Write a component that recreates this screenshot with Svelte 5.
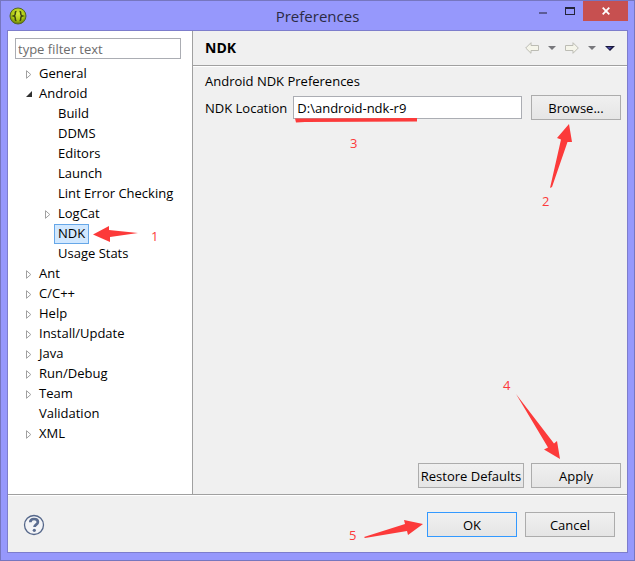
<script lang="ts">
	type Node = { label: string; level: number; state?: 'open' | 'closed' };

	const nodes: Node[] = [
		{ label: 'General', level: 0, state: 'closed' },
		{ label: 'Android', level: 0, state: 'open' },
		{ label: 'Build', level: 1 },
		{ label: 'DDMS', level: 1 },
		{ label: 'Editors', level: 1 },
		{ label: 'Launch', level: 1 },
		{ label: 'Lint Error Checking', level: 1 },
		{ label: 'LogCat', level: 1, state: 'closed' },
		{ label: 'NDK', level: 1 },
		{ label: 'Usage Stats', level: 1 },
		{ label: 'Ant', level: 0, state: 'closed' },
		{ label: 'C/C++', level: 0, state: 'closed' },
		{ label: 'Help', level: 0, state: 'closed' },
		{ label: 'Install/Update', level: 0, state: 'closed' },
		{ label: 'Java', level: 0, state: 'closed' },
		{ label: 'Run/Debug', level: 0, state: 'closed' },
		{ label: 'Team', level: 0, state: 'closed' },
		{ label: 'Validation', level: 0 },
		{ label: 'XML', level: 0, state: 'closed' }
	];

	const selected = 'NDK';
	let filter = $state('');
	let location = $state('D:\\android-ndk-r9');
</script>

<!-- step marks hang off the control they point at -->
{#snippet mark(step: string, x: number, y: number, d: string)}
	<svg class="mark" width="1" height="1" aria-hidden="true">
		<path {d} />
		<text {x} {y}>{step}</text>
	</svg>
{/snippet}

<div class="window">
	<header class="titlebar">
		<svg class="logo" width="18" height="18" viewBox="0 0 18 18" aria-hidden="true">
			<defs>
				<radialGradient id="ball" cx="50%" cy="35%" r="65%">
					<stop offset="0" stop-color="#d8ea3c" />
					<stop offset="0.65" stop-color="#a9c410" />
					<stop offset="1" stop-color="#5e7408" />
				</radialGradient>
			</defs>
			<circle cx="9" cy="9" r="8" fill="url(#ball)" stroke="#53652a" />
			<path d="M7.500 4.500C6 4.500 6.300 5.600 6.300 6.800S5.700 8.700 4.700 9c1 .3 1.600 1 1.600 2.200S6 13.500 7.500 13.500M10.500 4.500c1.500 0 1.200 1.100 1.200 2.300S12.300 8.700 13.300 9c-1 .3-1.600 1-1.600 2.200s.3 2.300-1.200 2.300" fill="none" stroke="#3c4510" stroke-width="1.500" />
		</svg>
		<h1>Preferences</h1>
		<div class="controls">
			<button class="min" aria-label="Minimize">
				<svg width="8" height="8" viewBox="0 0 8 8"><path d="M0 5h8v2H0z" fill="#5c5c96" /></svg>
			</button>
			<button class="max" aria-label="Maximize">
				<svg width="10" height="8" viewBox="0 0 10 8"><path d="M0 0h10v8H0zM1 2v5h8V2z" fill="#24243a" fill-rule="evenodd" /></svg>
			</button>
			<button class="close" aria-label="Close">
				<svg width="8" height="8" viewBox="0 0 8 8"><path d="M.7.7l6.600 6.600M7.300.7L.7 7.300" stroke="#fff" stroke-width="1.800" /></svg>
			</button>
		</div>
	</header>

	<div class="client">
		<div class="main">
			<aside class="sidebar">
				<input class="filter" type="text" placeholder="type filter text" aria-label="Filter" bind:value={filter} />
				<ul class="tree">
					{#each nodes as node (node.label)}
						<li class:child={node.level === 1}>
							<span class="twisty">
								{#if node.state === 'closed'}
									<svg width="6" height="9" viewBox="0 0 6 9"><path d="M.5.7v7.600L4.800 4.500z" fill="#fff" stroke="#a0a0a0" /></svg>
								{:else if node.state === 'open'}
									<svg width="6" height="6" viewBox="0 0 6 6"><path d="M6 0v6H0z" fill="#303030" /></svg>
								{/if}
							</span>
							<button class="item" class:selected={node.label === selected}>
								{node.label}
								{#if node.label === selected}
									{@render mark('1', 96, 16, 'M38 9.500L54 1V5L83 8 55 12V17z')}
								{/if}
							</button>
						</li>
					{/each}
				</ul>
			</aside>

			<section class="page">
				<header class="page-head">
					<h2>NDK</h2>
					<nav class="history">
						<button aria-label="Back">
							<svg width="14" height="12" viewBox="0 0 14 12"><path d="M.7 6L6 .7V3.500h7.500v5H6v2.800z" fill="#f5f5ea" stroke="#bcbcb4" /></svg>
						</button>
						<button aria-label="Back history">
							<svg width="8" height="4" viewBox="0 0 8 4"><path d="M0 0h8L4 4z" fill="#77777b" /></svg>
						</button>
						<button aria-label="Forward">
							<svg width="14" height="12" viewBox="0 0 14 12"><path d="M13.300 6L8 .7V3.500H.5v5H8v2.800z" fill="#f5f5ea" stroke="#bcbcb4" /></svg>
						</button>
						<button aria-label="Forward history">
							<svg width="8" height="4" viewBox="0 0 8 4"><path d="M0 0h8L4 4z" fill="#77777b" /></svg>
						</button>
						<button aria-label="View menu">
							<svg width="10" height="5" viewBox="0 0 10 5"><path d="M0 0h10L5 5z" fill="#17173c" /><path d="M2 1h5L4.500 3.500z" fill="#4747a0" /></svg>
						</button>
					</nav>
				</header>

				<div class="page-body">
					<p>Android NDK Preferences</p>
					<div class="field">
						<label for="ndk-location">NDK Location</label>
						<div class="anchor">
							<input id="ndk-location" type="text" bind:value={location} />
							{@render mark('3', 57, 52, 'M2 22.500L124 22V25.500L12 26 3 26.500z')}
						</div>
						<button class="btn">
							Browse...
							{@render mark('2', 10, 110, 'M37 28L25 42 29 43.500 18 92 20 91 35.500 46H40z')}
						</button>
					</div>
					<div class="actions">
						<button class="btn wide">Restore Defaults</button>
						<button class="btn">
							Apply
							{@render mark('4', -29, -74, 'M-16-70L16-16.500 12-14.500 28-5 25-23 22-20.500z')}
						</button>
					</div>
				</div>
			</section>
		</div>

		<footer class="footer">
			<button class="help" aria-label="Help">
				<svg width="22" height="22" viewBox="0 0 22 22">
					<circle cx="11" cy="11" r="9.500" fill="#f3f4f7" stroke="#55678a" stroke-width="1.300" />
					<path d="M7.300 8.300C7.300 6 8.900 5 11 5s3.900 1.100 3.900 3.100c0 2.500-3.400 2.600-3.400 5" fill="none" stroke="#5b6d90" stroke-width="2.700" />
					<circle cx="11.300" cy="16.300" r="1.600" fill="#5b6d90" />
				</svg>
			</button>
			<button class="btn default">
				OK
				{@render mark('5', -79, 27, 'M-64 24L-23 11-24 7-5 11-20 22-21 18-63 25z')}
			</button>
			<button class="btn">Cancel</button>
		</footer>
	</div>
</div>

<style>
	:global(body) {
		margin: 0;
	}
	.window {
		box-sizing: border-box;
		min-height: 100vh;
		display: flex;
		flex-direction: column;
		padding: 0 6px 7px;
		border: 1px solid #7676bf;
		background: #9698fc;
		font-family: 'Open Sans', 'Noto Sans', sans-serif;
		font-size: 13px;
		line-height: 20px;
		color: #000;
	}
	button {
		padding: 0;
		border: 0;
		background: none;
		font: inherit;
		color: inherit;
	}
	svg {
		display: block;
	}
	h1,
	h2,
	p {
		margin: 0;
	}

	.titlebar {
		display: grid;
		grid-template-columns: 1fr auto 1fr;
		align-items: center;
		height: 29px;
	}
	.logo {
		margin-left: 2px;
	}
	h1 {
		font-size: 15px;
		font-weight: 400;
		color: #2b2b45;
	}
	.controls {
		display: flex;
		justify-content: flex-end;
		align-self: start;
	}
	.controls button {
		display: flex;
		justify-content: center;
		align-items: center;
		width: 27px;
		height: 20px;
	}
	.controls .close {
		width: 45px;
		background: #c75050;
	}

	.client {
		flex: 1;
		display: flex;
		flex-direction: column;
		border: 1px solid #7d7dcc;
		background: #f0f0f0;
	}
	.main {
		flex: 1;
		display: flex;
		border-bottom: 1px solid #a0a0a0;
	}
	.sidebar {
		box-sizing: border-box;
		width: 185px;
		padding: 7px 11px 7px 7px;
		border-right: 1px solid #a0a0a0;
		background: #fff;
	}
	input {
		box-sizing: border-box;
		width: 100%;
		border: 1px solid #abadb3;
		background: #fff;
		font: inherit;
		color: inherit;
		outline: 0;
	}
	.filter {
		display: block;
		height: 21px;
		padding: 0 2px;
	}
	.filter::placeholder {
		color: #6d6d6d;
	}
	.tree {
		list-style: none;
		margin: 5px 0 0;
		padding: 0 0 0 11px;
	}
	.tree li {
		display: flex;
		align-items: center;
		height: 20px;
	}
	.tree .child {
		padding-left: 19px;
	}
	.twisty {
		width: 9px;
	}
	.item {
		box-sizing: border-box;
		position: relative;
		height: 20px;
		padding: 0 3px 2px;
		border: 1px solid transparent;
		line-height: 16px;
		white-space: nowrap;
	}
	.item.selected {
		border-color: #66a7e8;
		background: #d1e8ff;
	}

	.page {
		flex: 1;
		display: flex;
		flex-direction: column;
		min-width: 0;
	}
	.page-head {
		display: flex;
		justify-content: space-between;
		align-items: center;
		height: 34px;
		padding: 0 12px;
		border-bottom: 1px solid #a0a0a0;
	}
	h2 {
		font-size: 14px;
		font-weight: 700;
	}
	.history {
		display: flex;
		align-items: center;
		gap: 9px;
	}
	.page-body {
		flex: 1;
		display: flex;
		flex-direction: column;
		padding: 4px 6px 6px 12px;
		border-top: 1px solid #fff;
	}
	.field {
		display: flex;
		align-items: center;
		margin-top: 4px;
	}
	.field label {
		margin-right: 6px;
		white-space: nowrap;
	}
	.anchor {
		position: relative;
		flex: 1;
		margin-right: 9px;
	}
	.field input {
		display: block;
		height: 23px;
		padding: 0 3px;
	}
	.actions {
		display: flex;
		justify-content: flex-end;
		gap: 7px;
		margin-top: auto;
	}

	.btn {
		box-sizing: border-box;
		position: relative;
		width: 90px;
		height: 25px;
		border: 1px solid #acacac;
		background: linear-gradient(#f0f0f0, #e5e5e5);
	}
	.btn.wide {
		width: 106px;
	}
	.btn.default {
		border-color: #3399ff;
	}

	.footer {
		display: flex;
		align-items: center;
		gap: 8px;
		padding: 16px 12px 15px 15px;
		border-top: 1px solid #fff;
	}
	.help {
		margin-right: auto;
	}

	.mark {
		position: absolute;
		top: 0;
		left: 0;
		overflow: visible;
		pointer-events: none;
		fill: #fc3a3a;
	}
	.mark text {
		font-size: 13px;
	}
</style>
